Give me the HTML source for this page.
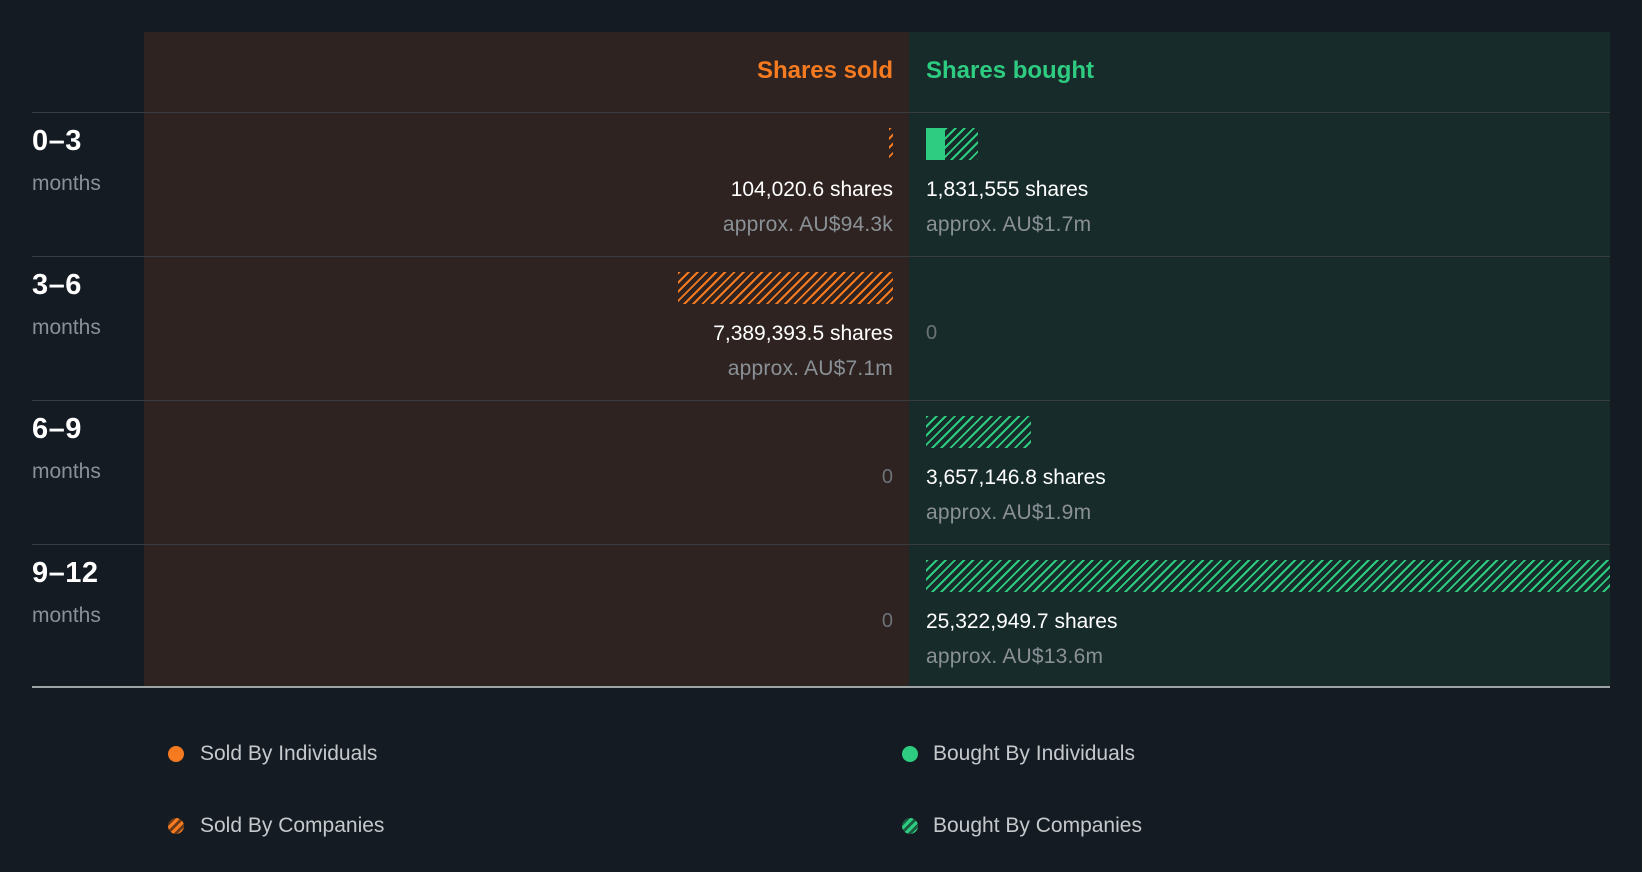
<!DOCTYPE html>
<html><head><style>
*{margin:0;padding:0;box-sizing:border-box}
body{width:1642px;height:872px;background:#151b23;font-family:"Liberation Sans",Roboto,sans-serif;position:relative;overflow:hidden}
.abs{position:absolute;white-space:nowrap}
.l{left:144px;width:765px;top:32px;height:655px;background:#2e2321}
.r{left:909px;width:701px;top:32px;height:655px;background:#182b2b}
.hl{left:32px;width:1578px;height:1px;background:#3a3d40}
.h{font-size:24px;font-weight:bold;top:57px}
.lab{left:32px;color:#fff;font-size:29px;font-weight:bold;letter-spacing:0.5px}
.mon{left:32px;color:#8a9196;font-size:21px}
.sh{color:#fff;font-size:21px}
.ap{color:#8a9196;font-size:21px;letter-spacing:0.2px}
.zero{color:#6c7376;font-size:20px}
.ho{background:repeating-linear-gradient(135deg,#f57a20 0 2px,transparent 2px 6.5px)}
.hg{background:repeating-linear-gradient(135deg,#2ecc80 0 2px,transparent 2px 6.5px)}
.leg{font-size:21px;color:#c5c9cc}
.dot{width:16px;height:16px;border-radius:50%}
</style></head><body>
<div class="abs l"></div><div class="abs r"></div>
<div class="abs h" style="right:749px;color:#f57a20">Shares sold</div>
<div class="abs h" style="left:926px;color:#2ecc80">Shares bought</div>
<div class="abs hl" style="top:112px"></div>
<div class="abs hl" style="top:256px"></div>
<div class="abs hl" style="top:400px"></div>
<div class="abs hl" style="top:544px"></div>
<div class="abs" style="left:32px;width:1578px;top:686px;height:2px;background:#9ea3a6"></div>

<div class="abs lab" style="top:125px">0–3</div><div class="abs mon" style="top:172px">months</div>
<div class="abs lab" style="top:269px">3–6</div><div class="abs mon" style="top:316px">months</div>
<div class="abs lab" style="top:413px">6–9</div><div class="abs mon" style="top:460px">months</div>
<div class="abs lab" style="top:557px">9–12</div><div class="abs mon" style="top:604px">months</div>

<div class="abs ho" style="left:889px;width:4px;top:128px;height:32px"></div>
<div class="abs sh" style="right:749px;top:178px">104,020.6 shares</div>
<div class="abs ap" style="right:749px;top:213px">approx. AU$94.3k</div>
<div class="abs" style="left:926px;width:19px;top:128px;height:32px;background:#2ecc80"></div>
<div class="abs hg" style="left:945px;width:33px;top:128px;height:32px"></div>
<div class="abs sh" style="left:926px;top:178px">1,831,555 shares</div>
<div class="abs ap" style="left:926px;top:213px">approx. AU$1.7m</div>

<div class="abs ho" style="left:678px;width:215px;top:272px;height:32px"></div>
<div class="abs sh" style="right:749px;top:322px">7,389,393.5 shares</div>
<div class="abs ap" style="right:749px;top:357px">approx. AU$7.1m</div>
<div class="abs zero" style="left:926px;top:322px">0</div>

<div class="abs zero" style="right:749px;top:466px">0</div>
<div class="abs hg" style="left:926px;width:105px;top:416px;height:32px"></div>
<div class="abs sh" style="left:926px;top:466px">3,657,146.8 shares</div>
<div class="abs ap" style="left:926px;top:501px">approx. AU$1.9m</div>

<div class="abs zero" style="right:749px;top:610px">0</div>
<div class="abs hg" style="left:926px;width:684px;top:560px;height:32px"></div>
<div class="abs sh" style="left:926px;top:610px">25,322,949.7 shares</div>
<div class="abs ap" style="left:926px;top:645px">approx. AU$13.6m</div>

<div class="abs dot" style="left:168px;top:746px;background:#f57a20"></div>
<div class="abs leg" style="left:200px;top:742px">Sold By Individuals</div>
<div class="abs dot" style="left:902px;top:746px;background:#2ecc80"></div>
<div class="abs leg" style="left:933px;top:742px">Bought By Individuals</div>
<div class="abs dot" style="left:168px;top:818px;background:repeating-linear-gradient(135deg,#f57a20 0 3px,#6a3a18 3px 6px)"></div>
<div class="abs leg" style="left:200px;top:814px">Sold By Companies</div>
<div class="abs dot" style="left:902px;top:818px;background:repeating-linear-gradient(135deg,#2ecc80 0 3px,#1a5a3e 3px 6px)"></div>
<div class="abs leg" style="left:933px;top:814px">Bought By Companies</div>
</body></html>
